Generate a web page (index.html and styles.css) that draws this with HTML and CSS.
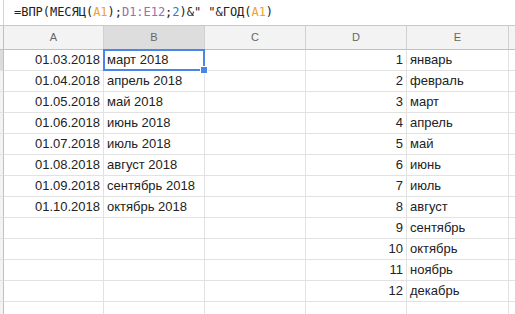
FILE: index.html
```html
<!DOCTYPE html>
<html>
<head>
<meta charset="utf-8">
<link rel="stylesheet" href="styles.css">
</head>
<body>
<div class="fbar"><div class="fedge"></div><div class="ftext">=ВПР(МЕСЯЦ(<span class="ref-a">A1</span>);<span class="ref-d">D1:E12</span>;<span class="num">2</span>)&amp;"&nbsp;"&amp;ГОД(<span class="ref-a">A1</span>)</div></div>
<div class="grid">
  <div class="rh hd"></div><div class="ch">A</div><div class="ch sel">B</div><div class="ch">C</div><div class="ch">D</div><div class="ch">E</div><div class="ch last"></div>

  <div class="rh on"></div><div class="c r">01.03.2018</div><div class="c active">март 2018<span class="handle"></span></div><div class="c"></div><div class="c r">1</div><div class="c">январь</div><div class="c last"></div>
  <div class="rh"></div><div class="c r">01.04.2018</div><div class="c">апрель 2018</div><div class="c"></div><div class="c r">2</div><div class="c">февраль</div><div class="c last"></div>
  <div class="rh"></div><div class="c r">01.05.2018</div><div class="c">май 2018</div><div class="c"></div><div class="c r">3</div><div class="c">март</div><div class="c last"></div>
  <div class="rh"></div><div class="c r">01.06.2018</div><div class="c">июнь 2018</div><div class="c"></div><div class="c r">4</div><div class="c">апрель</div><div class="c last"></div>
  <div class="rh"></div><div class="c r">01.07.2018</div><div class="c">июль 2018</div><div class="c"></div><div class="c r">5</div><div class="c">май</div><div class="c last"></div>
  <div class="rh"></div><div class="c r">01.08.2018</div><div class="c">август 2018</div><div class="c"></div><div class="c r">6</div><div class="c">июнь</div><div class="c last"></div>
  <div class="rh"></div><div class="c r">01.09.2018</div><div class="c">сентябрь 2018</div><div class="c"></div><div class="c r">7</div><div class="c">июль</div><div class="c last"></div>
  <div class="rh"></div><div class="c r">01.10.2018</div><div class="c">октябрь 2018</div><div class="c"></div><div class="c r">8</div><div class="c">август</div><div class="c last"></div>
  <div class="rh"></div><div class="c"></div><div class="c"></div><div class="c"></div><div class="c r">9</div><div class="c">сентябрь</div><div class="c last"></div>
  <div class="rh"></div><div class="c"></div><div class="c"></div><div class="c"></div><div class="c r">10</div><div class="c">октябрь</div><div class="c last"></div>
  <div class="rh"></div><div class="c"></div><div class="c"></div><div class="c"></div><div class="c r">11</div><div class="c">ноябрь</div><div class="c last"></div>
  <div class="rh"></div><div class="c"></div><div class="c"></div><div class="c"></div><div class="c r">12</div><div class="c">декабрь</div><div class="c last"></div>
  <div class="rh"></div><div class="c"></div><div class="c"></div><div class="c"></div><div class="c"></div><div class="c"></div><div class="c last"></div>
</div>
</body>
</html>
```
FILE: styles.css
```css
html, body {
  margin: 0;
  padding: 0;
  background: #fff;
  overflow: hidden;
}
body {
  width: 515px;
  height: 314px;
  font-family: "Liberation Sans", Arial, sans-serif;
}
.fbar {
  height: 26px;
  box-sizing: border-box;
  border-bottom: 1px solid #c9c9c9;
  display: flex;
  align-items: stretch;
}
.fedge {
  width: 3px;
  border-right: 1px solid #d4d4d4;
}
.ftext {
  padding-left: 10px;
  font-family: "DejaVu Sans Mono", "Liberation Mono", monospace;
  font-size: 12px;
  letter-spacing: -0.03px;
  line-height: 25px;
  color: #222;
  white-space: nowrap;
}
.ref-a { color: #f1a22a; }
.ref-d { color: #9a6eb0; }
.num { color: #3b78c2; }

.grid {
  display: grid;
  grid-template-columns: 4px 100px 101px 101px 101px 102px 1fr;
  grid-template-rows: 24px repeat(13, 21px);
}
.rh {
  background: #f3f3f3;
  border-right: 1px solid #c0c0c0;
  border-bottom: 1px solid #e2e2e2;
}
.rh.hd {
  border-bottom: 1px solid #c0c0c0;
}
.rh.on {
  background: #dcdcdc;
}
.ch {
  background: #f3f3f3;
  border-right: 1px solid #d0d0d0;
  border-bottom: 1px solid #c0c0c0;
  color: #666;
  font-size: 11px;
  line-height: 23px;
  text-align: center;
}
.ch.sel {
  background: #dddddd;
}
.c {
  position: relative;
  border-right: 1px solid #e2e2e2;
  border-bottom: 1px solid #e2e2e2;
  font-size: 13px;
  line-height: 20px;
  padding: 0 3px;
  color: #222;
  white-space: nowrap;
  overflow: visible;
}
.c.r {
  text-align: right;
}
.last {
  border-right: none;
}
.active::after {
  content: "";
  position: absolute;
  left: -1px;
  top: -1px;
  right: -1px;
  bottom: -1px;
  border: 2px solid #4a86e8;
  pointer-events: none;
}
.handle {
  position: absolute;
  right: -4px;
  bottom: -4px;
  width: 6px;
  height: 6px;
  background: #4a86e8;
  border: 1px solid #fff;
  z-index: 2;
}
```
